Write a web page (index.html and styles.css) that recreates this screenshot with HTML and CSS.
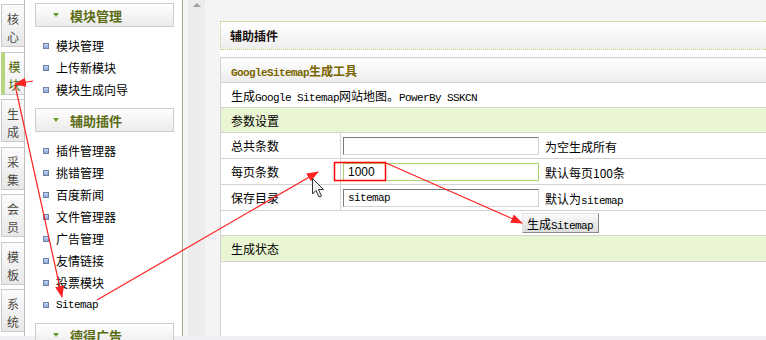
FILE: index.html
```html
<!DOCTYPE html>
<html lang="zh-CN">
<head>
  <meta charset="UTF-8">
  <title>辅助插件 - Sitemap</title>
  <link rel="stylesheet" href="styles.css">
</head>
<body>
  <div class="page">
    <div class="tabs">
      <div class="tab"><span>核</span><span>心</span></div>
      <div class="tab on"><span>模</span><span>块</span></div>
      <div class="tab"><span>生</span><span>成</span></div>
      <div class="tab"><span>采</span><span>集</span></div>
      <div class="tab"><span>会</span><span>员</span></div>
      <div class="tab"><span>模</span><span>板</span></div>
      <div class="tab"><span>系</span><span>统</span></div>
    </div>

    <div class="side">
      <div class="side-head first"><span class="tri"></span>模块管理</div>
      <ul class="side-list">
        <li>模块管理</li>
        <li>上传新模块</li>
        <li>模块生成向导</li>
      </ul>
      <div class="side-head"><span class="tri"></span>辅助插件</div>
      <ul class="side-list">
        <li>插件管理器</li>
        <li>挑错管理</li>
        <li>百度新闻</li>
        <li>文件管理器</li>
        <li>广告管理</li>
        <li>友情链接</li>
        <li>投票模块</li>
        <li><span class="en">Sitemap</span></li>
      </ul>
      <div class="side-head"><span class="tri"></span>德得广告</div>
    </div>

    <div class="scroll"><span class="up"></span></div>

    <div class="main">
      <div class="title-box">辅助插件</div>
      <div class="panel">
        <table class="form">
          <tr>
            <th colspan="2"><span class="en">GoogleSitemap</span>生成工具</th>
          </tr>
          <tr>
            <td colspan="2">生成<span class="en">Google Sitemap</span>网站地图。<span class="en">PowerBy SSKCN</span></td>
          </tr>
          <tr class="green">
            <td colspan="2">参数设置</td>
          </tr>
          <tr class="tall">
            <td class="lbl">总共条数</td>
            <td class="field"><input type="text" value=""><span class="note">为空生成所有</span></td>
          </tr>
          <tr class="tall">
            <td class="lbl">每页条数</td>
            <td class="field"><input type="text" class="focus" value="1000"><span class="note">默认每页100条</span></td>
          </tr>
          <tr class="tall">
            <td class="lbl">保存目录</td>
            <td class="field"><input type="text" class="mono" value="sitemap"><span class="note">默认为<span class="en">sitemap</span></span></td>
          </tr>
          <tr>
            <td colspan="2" class="center"><button class="btn">生成<span class="en">Sitemap</span></button></td>
          </tr>
          <tr class="green tall">
            <td colspan="2">生成状态</td>
          </tr>
        </table>
        <div class="fill"></div>
      </div>
    </div>

    <!-- annotations drawn over the screenshot -->
    <svg class="marks" width="766" height="336" viewBox="0 0 766 336">
      <defs>
        <marker id="ah" markerWidth="12" markerHeight="9" refX="11" refY="4.5" orient="auto" markerUnits="userSpaceOnUse">
          <path d="M0,0 L12,4.5 L0,9 Z" fill="#f22"/>
        </marker>
      </defs>
      <line x1="33" y1="81" x2="15" y2="84" stroke="#f22" stroke-width="1.2" marker-end="url(#ah)"/>
      <line x1="15" y1="85" x2="62" y2="297" stroke="#f22" stroke-width="1.2" marker-end="url(#ah)"/>
      <line x1="97" y1="300" x2="318" y2="172" stroke="#f22" stroke-width="1.2" marker-end="url(#ah)"/>
      <line x1="386" y1="163" x2="522" y2="223" stroke="#f22" stroke-width="1.2" marker-end="url(#ah)"/>
      <rect x="334.5" y="162.5" width="51" height="18" fill="none" stroke="#f00" stroke-width="1.5"/>
      <path transform="translate(312,178)" d="M0.5,0.5 V16 L4,12.5 L7,19 L9.5,18 L6.5,11.5 H11.5 Z" fill="#eee" stroke="#333" stroke-width="1"/>
    </svg>
  </div>
  <div class="bottom"></div>
</body>
</html>
```

FILE: styles.css
```css
body {
  margin: 0;
  width: 766px;
  height: 340px;
  overflow: hidden;
  font-family: "Noto Sans CJK SC", sans-serif;
  font-size: 12px;
  color: #000;
}

.en {
  font-family: "Liberation Mono", monospace;
  font-size: 11px;
  letter-spacing: -0.6px;
}

.page {
  position: relative;
  display: flex;
  height: 336px;
}

.bottom {
  height: 4px;
  background: #eef0f3;
}

/* left vertical tabs */
.tabs {
  flex: none;
  width: 24px;
  border-right: 1px solid #bdbdbd;
  padding-top: 4px;
  display: flex;
  flex-direction: column;
  gap: 4.5px;
}

.tab {
  height: 43px;
  margin-left: 1px;
  box-sizing: border-box;
  border: 1px solid #cacaca;
  border-right: 0;
  background: linear-gradient(#fbfbfb, #e8e8e8);
  padding-top: 5px;
  text-align: center;
  font-size: 12px;
  color: #4d4a44;
}

.tab span {
  display: block;
  height: 18px;
  line-height: 18px;
}

.tab.on {
  border-left: 4px solid #b7d47f;
  background: linear-gradient(#fdfdfd, #eeeeee);
  color: #4f6400;
}

/* sidebar menu */
.side {
  flex: none;
  width: 157px;
  border-right: 1px solid #a3a38e;
  background: #fff;
}

.side-head {
  margin: 0 8px 0 10px;
  height: 24px;
  box-sizing: border-box;
  border: 1px solid #cdcdcd;
  background: linear-gradient(#ffffff, #ebebeb);
  display: flex;
  align-items: center;
  padding-left: 17px;
  font-size: 13px;
  font-weight: bold;
  color: #5a6b12;
}

.side-head.first {
  margin-top: 3px;
}

.tri {
  width: 0;
  height: 0;
  border-top: 4px solid #6f9e2a;
  border-left: 3px solid transparent;
  border-right: 3px solid transparent;
  margin-right: 11px;
}

.side-list {
  list-style: none;
  margin: 0;
  padding: 7.5px 0 7.5px 18px;
}

.side-list li {
  height: 22px;
  display: flex;
  align-items: center;
  font-size: 12px;
}

.side-list li::before {
  content: "";
  width: 4px;
  height: 4px;
  border: 1px solid #6d80a8;
  background: linear-gradient(#c6d6f4, #8ea8dc);
  margin-right: 7px;
}

/* fake frame scrollbar */
.scroll {
  flex: none;
  width: 22px;
  position: relative;
  background: linear-gradient(to right, #f5f5f5 5px, #ececec 5px);
}

.up {
  position: absolute;
  left: 10px;
  top: 3px;
  border-bottom: 4px solid #a0a0a0;
  border-left: 4px solid transparent;
  border-right: 4px solid transparent;
}

/* main content */
.main {
  flex: 1;
  min-width: 0;
  background: #f4f4f4;
  padding: 21px 0 0 15px;
  display: flex;
  flex-direction: column;
}

.title-box {
  height: 29px;
  box-sizing: border-box;
  border: 1px dotted #b5d568;
  border-right: 0;
  background: linear-gradient(#ffffff, #eeeeee);
  padding-left: 9px;
  line-height: 27px;
  font-weight: bold;
  color: #1a1010;
}

.panel {
  flex: 1;
  background: #fff;
  padding-top: 7px;
  display: flex;
  flex-direction: column;
}

.form {
  border-collapse: collapse;
  width: 680px;
}

.form th,
.form td {
  border: 1px solid #d3d3d3;
  height: 24px;
  padding: 0 10px;
  text-align: left;
  white-space: nowrap;
}

.form .tall td {
  height: 25px;
}

.form th {
  background: linear-gradient(#ffffff, #ececec);
  color: #7a6400;
  font-weight: bold;
}

.form .green td {
  background: #eaf6d3;
}

.form .lbl {
  width: 99px;
}

.form .field {
  padding-left: 2px;
}

.form .center {
  text-align: center;
}

.fill {
  flex: 1;
  border-left: 1px solid #d3d3d3;
}

input {
  width: 196px;
  height: 18px;
  box-sizing: border-box;
  border: 1px solid;
  border-color: #7a7a7a #d4d4d4 #d4d4d4 #7a7a7a;
  padding: 0 4px;
  font-family: "Liberation Sans", sans-serif;
  font-size: 12px;
  vertical-align: middle;
  outline: none;
}

input.focus {
  border-color: #a8d46f;
}

input.mono {
  font-family: "Liberation Mono", monospace;
  font-size: 11px;
  letter-spacing: -0.6px;
}

.note {
  margin-left: 6px;
  vertical-align: middle;
}

.btn {
  width: 77px;
  height: 20px;
  padding: 0;
  border: 1px solid;
  border-color: #e2e2e2 #8a8a8a #8a8a8a #e2e2e2;
  background: linear-gradient(#fbfbfb, #dcdcdc);
  font-family: "Noto Sans CJK SC", sans-serif;
  font-size: 12px;
  color: #000;
  vertical-align: middle;
}

.marks {
  position: absolute;
  left: 0;
  top: 0;
  pointer-events: none;
}
```
